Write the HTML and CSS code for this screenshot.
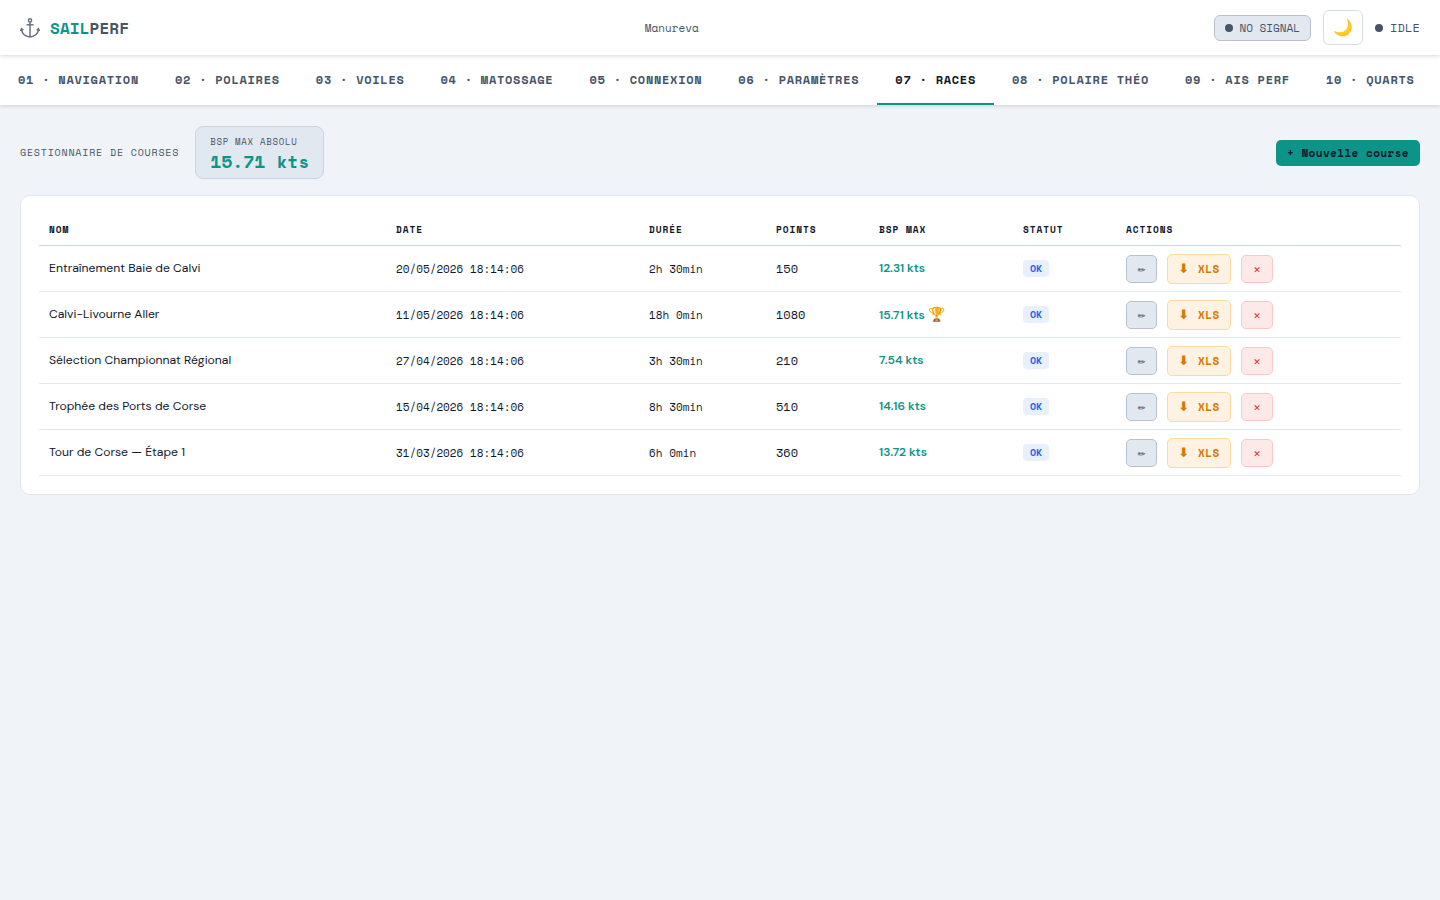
FILE: index.html
```html
<!DOCTYPE html>
<html lang="fr">
<head>
    <meta charset="UTF-8">
    <meta name="viewport" content="width=device-width, initial-scale=1.0">
    <title>SailPerf - Races</title>
    <link rel="stylesheet" href="styles.css">
</head>
<body>
    <header class="topbar">
        <div class="logo">
            <svg class="logo-icon" viewBox="0 0 20 20" width="20" height="20" fill="none" stroke="#6b7280" stroke-width="1.5">
                <circle cx="10" cy="2.4" r="1.6"/>
                <path d="M10 4v15"/>
                <path d="M6.5 6.8h7"/>
                <path d="M1.5 11.5c0.5 4.5 4.5 7 8.5 7.5c4-0.5 8-3 8.5-7.5"/>
                <path d="M0.5 13l1-2.2l1.8 1.6M19.5 13l-1-2.2l-1.8 1.6"/>
            </svg>
            <span class="logo-text"><span class="logo-accent">SAIL</span>PERF</span>
        </div>
        <div class="boat-name">Manureva</div>
        <div class="topbar-right">
            <div class="signal"><span class="dot"></span>NO SIGNAL</div>
            <button class="theme-btn" type="button">🌙</button>
            <div class="idle"><span class="dot"></span>IDLE</div>
        </div>
    </header>

    <nav class="tabs">
        <a class="tab" href="#">01 · NAVIGATION</a>
        <a class="tab" href="#">02 · POLAIRES</a>
        <a class="tab" href="#">03 · VOILES</a>
        <a class="tab" href="#">04 · MATOSSAGE</a>
        <a class="tab" href="#">05 · CONNEXION</a>
        <a class="tab" href="#">06 · PARAMÈTRES</a>
        <a class="tab active" href="#">07 · RACES</a>
        <a class="tab" href="#">08 · POLAIRE THÉO</a>
        <a class="tab" href="#">09 · AIS PERF</a>
        <a class="tab" href="#">10 · QUARTS</a>
    </nav>

    <main class="content">
        <div class="toolbar">
            <div class="toolbar-left">
                <span class="section-title">GESTIONNAIRE DE COURSES</span>
                <div class="stat-box">
                    <div class="stat-label">BSP MAX ABSOLU</div>
                    <div class="stat-value">15.71 kts</div>
                </div>
            </div>
            <button class="new-btn" type="button">+ Nouvelle course</button>
        </div>

        <div class="card">
            <table class="races">
                <colgroup>
                    <col class="col-name">
                    <col class="col-date">
                    <col class="col-duration">
                    <col class="col-points">
                    <col class="col-bsp">
                    <col class="col-status">
                    <col>
                </colgroup>
                <thead>
                    <tr>
                        <th>NOM</th>
                        <th>DATE</th>
                        <th>DURÉE</th>
                        <th>POINTS</th>
                        <th>BSP MAX</th>
                        <th>STATUT</th>
                        <th>ACTIONS</th>
                    </tr>
                </thead>
                <tbody>
                    <tr>
                        <td>Entraînement Baie de Calvi</td>
                        <td class="mono">20/05/2026 18:14:06</td>
                        <td class="mono">2h 30min</td>
                        <td class="mono points">150</td>
                        <td class="bsp">12.31 kts</td>
                        <td><span class="badge">OK</span></td>
                        <td class="actions-cell">
                            <div class="actions">
                                <button class="btn btn-edit" type="button">✏</button>
                                <button class="btn btn-xls" type="button"><span class="arrow">⬇</span> XLS</button>
                                <button class="btn btn-del" type="button">✕</button>
                            </div>
                        </td>
                    </tr>
                    <tr>
                        <td>Calvi-Livourne Aller</td>
                        <td class="mono">11/05/2026 18:14:06</td>
                        <td class="mono">18h 0min</td>
                        <td class="mono points">1080</td>
                        <td class="bsp">15.71 kts <span class="trophy">🏆</span></td>
                        <td><span class="badge">OK</span></td>
                        <td class="actions-cell">
                            <div class="actions">
                                <button class="btn btn-edit" type="button">✏</button>
                                <button class="btn btn-xls" type="button"><span class="arrow">⬇</span> XLS</button>
                                <button class="btn btn-del" type="button">✕</button>
                            </div>
                        </td>
                    </tr>
                    <tr>
                        <td>Sélection Championnat Régional</td>
                        <td class="mono">27/04/2026 18:14:06</td>
                        <td class="mono">3h 30min</td>
                        <td class="mono points">210</td>
                        <td class="bsp">7.54 kts</td>
                        <td><span class="badge">OK</span></td>
                        <td class="actions-cell">
                            <div class="actions">
                                <button class="btn btn-edit" type="button">✏</button>
                                <button class="btn btn-xls" type="button"><span class="arrow">⬇</span> XLS</button>
                                <button class="btn btn-del" type="button">✕</button>
                            </div>
                        </td>
                    </tr>
                    <tr>
                        <td>Trophée des Ports de Corse</td>
                        <td class="mono">15/04/2026 18:14:06</td>
                        <td class="mono">8h 30min</td>
                        <td class="mono points">510</td>
                        <td class="bsp">14.16 kts</td>
                        <td><span class="badge">OK</span></td>
                        <td class="actions-cell">
                            <div class="actions">
                                <button class="btn btn-edit" type="button">✏</button>
                                <button class="btn btn-xls" type="button"><span class="arrow">⬇</span> XLS</button>
                                <button class="btn btn-del" type="button">✕</button>
                            </div>
                        </td>
                    </tr>
                    <tr>
                        <td>Tour de Corse — Étape 1</td>
                        <td class="mono">31/03/2026 18:14:06</td>
                        <td class="mono">6h 0min</td>
                        <td class="mono points">360</td>
                        <td class="bsp">13.72 kts</td>
                        <td><span class="badge">OK</span></td>
                        <td class="actions-cell">
                            <div class="actions">
                                <button class="btn btn-edit" type="button">✏</button>
                                <button class="btn btn-xls" type="button"><span class="arrow">⬇</span> XLS</button>
                                <button class="btn btn-del" type="button">✕</button>
                            </div>
                        </td>
                    </tr>
                </tbody>
            </table>
        </div>
    </main>
</body>
</html>
```

FILE: styles.css
```css
/* General */
* {
    margin: 0;
    padding: 0;
    box-sizing: border-box;
}

body {
    font-family: 'DM Sans', 'Inter', sans-serif;
    font-optical-sizing: none;
    background-color: #f0f4f8;
    color: #0f172a;
    min-height: 900px;
}

button {
    font-family: inherit;
    cursor: pointer;
}

/* Top bar */
.topbar {
    position: relative;
    z-index: 2;
    display: flex;
    justify-content: space-between;
    align-items: center;
    height: 55px;
    padding: 0 20px;
    background-color: #fff;
    box-shadow: 0 1px 4px rgba(0, 0, 0, 0.15);
}

.logo {
    display: flex;
    align-items: center;
    gap: 10px;
}

.logo-text {
    font-family: 'Space Mono', 'Liberation Mono', monospace;
    font-size: 16px;
    font-weight: 700;
    letter-spacing: 0.1px;
    color: #475569;
}

.logo-accent {
    color: #0d9488;
}

.boat-name {
    font-family: 'Space Mono', 'Liberation Mono', monospace;
    font-size: 11px;
    color: #475569;
}

.topbar-right {
    display: flex;
    align-items: center;
    gap: 12px;
}

.dot {
    display: inline-block;
    width: 8px;
    height: 8px;
    border-radius: 50%;
    background-color: #475569;
}

.signal {
    display: flex;
    align-items: center;
    gap: 6px;
    height: 26px;
    padding: 0 10px;
    font-family: 'Space Mono', 'Liberation Mono', monospace;
    font-size: 11px;
    color: #475569;
    background-color: #e2e8f0;
    border: 1px solid #b8c2cf;
    border-radius: 6px;
}

.theme-btn {
    width: 40px;
    height: 35px;
    font-size: 16px;
    background-color: #fff;
    border: 1px solid #d8dde3;
    border-radius: 6px;
}

.idle {
    display: flex;
    align-items: center;
    gap: 7px;
    font-family: 'Space Mono', 'Liberation Mono', monospace;
    font-size: 12px;
    letter-spacing: 0.15px;
    color: #475569;
}

/* Tabs */
.tabs {
    position: relative;
    z-index: 1;
    display: flex;
    height: 50px;
    background-color: #fff;
    box-shadow: 0 1px 4px rgba(0, 0, 0, 0.15);
}

.tab {
    display: flex;
    align-items: center;
    padding: 0 18px;
    font-family: 'Space Mono', 'Liberation Mono', monospace;
    font-size: 12px;
    font-weight: 700;
    letter-spacing: 0.72px;
    white-space: nowrap;
    text-decoration: none;
    color: #475569;
    border-bottom: 2px solid transparent;
}

.tab.active {
    color: #0f172a;
    border-bottom-color: #0d9488;
}

/* Toolbar */
.content {
    padding: 21px 20px 20px;
}

.toolbar {
    display: flex;
    justify-content: space-between;
    align-items: center;
    margin-bottom: 16px;
}

.toolbar-left {
    display: flex;
    align-items: center;
    gap: 16px;
}

.section-title {
    font-family: 'Space Mono', 'Liberation Mono', monospace;
    font-size: 10px;
    letter-spacing: 0.8px;
    color: #475569;
}

.stat-box {
    padding: 8px 14px 5px;
    background-color: #e2e8f0;
    border: 1px solid #cbd5e1;
    border-radius: 8px;
}

.stat-label {
    font-family: 'Space Mono', 'Liberation Mono', monospace;
    font-size: 9px;
    letter-spacing: 0.72px;
    color: #475569;
}

.stat-value {
    margin-top: 1px;
    font-family: 'Space Mono', 'Liberation Mono', monospace;
    font-size: 18px;
    font-weight: 700;
    line-height: 24px;
    color: #0d9488;
}

.new-btn {
    height: 26px;
    padding: 0 11px;
    font-family: 'Space Mono', 'Liberation Mono', monospace;
    font-size: 11px;
    font-weight: 700;
    letter-spacing: 0.44px;
    color: #0f172a;
    background-color: #0d9488;
    border: none;
    border-radius: 5px;
}

/* Table */
.card {
    padding: 18px;
    background-color: #fff;
    border: 1px solid #e2e8f0;
    border-radius: 10px;
}

.races {
    width: 100%;
    table-layout: fixed;
    border-collapse: collapse;
}

.col-name { width: 347px; }
.col-date { width: 253px; }
.col-duration { width: 127px; }
.col-points { width: 103px; }
.col-bsp { width: 144px; }
.col-status { width: 103px; }

.races th {
    height: 31px;
    padding: 0 10px;
    font-family: 'Space Mono', 'Liberation Mono', monospace;
    font-size: 9.5px;
    font-weight: 700;
    letter-spacing: 0.95px;
    text-align: left;
    color: #0f172a;
    border-bottom: 1px solid #cbd5e1;
}

.races td {
    height: 46px;
    padding: 0 10px;
    font-size: 12.2px;
    color: #0f172a;
    border-bottom: 1px solid #e2e8f0;
}

.races td.mono {
    padding-top: 2px;
    font-family: 'Space Mono', 'Liberation Mono', monospace;
    font-size: 11px;
}

.races td.points {
    padding-top: 0;
    font-size: 12px;
}

.races td.bsp {
    font-weight: 600;
    font-size: 12px;
    color: #0d9488;
}

.races td.actions-cell {
    padding-top: 2px;
}

.trophy {
    font-size: 14px;
}

.badge {
    display: inline-block;
    padding: 1px 7px;
    font-family: 'Space Mono', 'Liberation Mono', monospace;
    font-size: 10px;
    font-weight: 700;
    color: #2563eb;
    background-color: #e8f0fe;
    border-radius: 4px;
}

.actions {
    display: flex;
    align-items: center;
    gap: 10px;
}

.btn {
    height: 28px;
    font-family: 'Space Mono', 'DejaVu Sans', monospace;
    font-size: 9px;
    font-weight: 700;
    border-radius: 5px;
}

.btn-edit {
    width: 31px;
    color: #334155;
    background-color: #e2e8f0;
    border: 1px solid #b8c2cf;
}

.btn-xls {
    width: 64px;
    height: 30px;
    font-size: 11px;
    letter-spacing: 0.5px;
    color: #d97706;
    background-color: #fef3e2;
    border: 1px solid #fcd9a0;
}

.arrow {
    font-size: 13px;
    line-height: 1;
    margin-right: 1px;
}

.btn-del {
    width: 32px;
    color: #dc2626;
    background-color: #fee9e9;
    border: 1px solid #fbc8c8;
}
```
